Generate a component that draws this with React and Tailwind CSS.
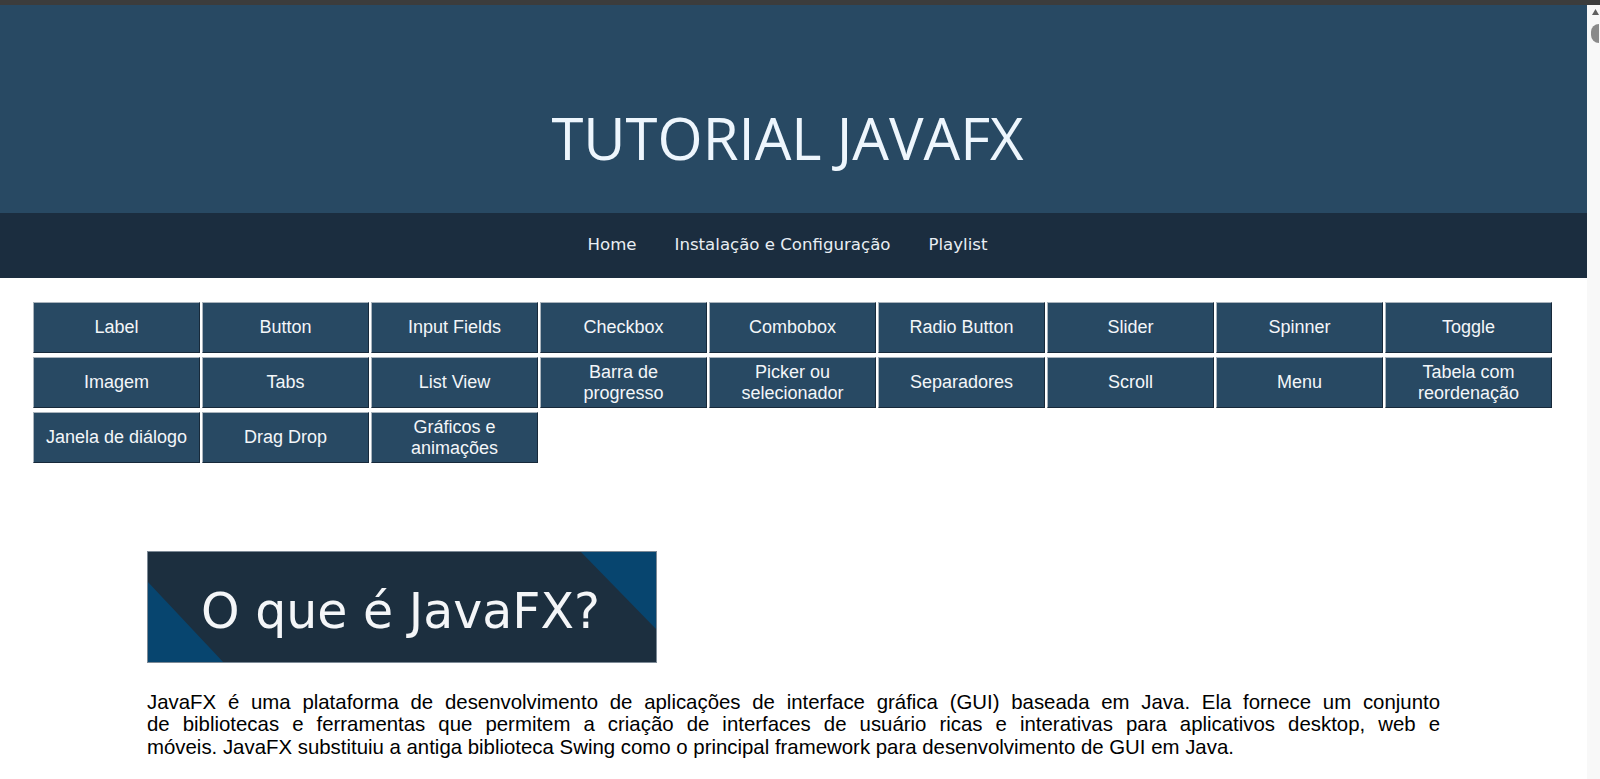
const componentes = [
  "Label",
  "Button",
  "Input Fields",
  "Checkbox",
  "Combobox",
  "Radio Button",
  "Slider",
  "Spinner",
  "Toggle",
  "Imagem",
  "Tabs",
  "List View",
  "Barra de progresso",
  "Picker ou selecionador",
  "Separadores",
  "Scroll",
  "Menu",
  "Tabela com reordenação",
  "Janela de diálogo",
  "Drag Drop",
  "Gráficos e animações",
];

const Banner = () => (
  <svg width="510" height="112" viewBox="0 0 510 112" className="block">
    <rect x="0" y="0" width="510" height="112" fill="#1c2f3f" />
    <polygon points="0,30 0,112 77,112" fill="#07456f" />
    <polygon points="433,0 510,0 510,79" fill="#07456f" />
    <rect x="0.5" y="0.5" width="509" height="111" fill="none" stroke="#7d8a96" strokeWidth="1" />
    <text
      x="54"
      y="77"
      fill="#f4f6f8"
      fontSize="49"
      fontFamily="'DejaVu Sans', sans-serif"
    >
      O que é JavaFX?
    </text>
  </svg>
);

const Scrollbar = () => (
  <div className="flex w-[13px] shrink-0 flex-col items-end bg-[#f8f8f8] pr-[1px]">
    <svg width="7" height="6" viewBox="0 0 7 6" className="mt-[4px]">
      <polygon points="3.5,0 7,6 0,6" fill="#5f5f5f" />
    </svg>
    <div className="mt-[9px] h-[19px] w-[8px] rounded-l-full bg-[#8a8a8a]" />
  </div>
);

export default function App() {
  return (
    <div className="flex h-screen flex-col overflow-hidden bg-white">
      <div className="h-[5px] shrink-0 bg-[#3c3c3c]" />

      <div className="flex min-h-0 flex-1">
        <div className="w-[1587px] shrink-0">
          {/* Cabeçalho */}
          <header className="h-[208px] bg-[#284963] pt-[93px] pr-[12px] text-center">
            <h1 className="font-['Open_Sans',sans-serif] text-[58px] leading-[79px] text-[#eef6fd]">
              TUTORIAL JAVAFX
            </h1>
          </header>

          {/* Navegação */}
          <nav className="flex h-[65px] items-center justify-center gap-[38px] bg-[#1b2d3f] pr-[12px] font-['DejaVu_Sans',sans-serif] text-[16.6px] text-[#e9eef3]">
            <a href="#">Home</a>
            <a href="#">Instalação e Configuração</a>
            <a href="#">Playlist</a>
          </nav>

          {/* Componentes */}
          <div className="mt-[24px] ml-[33px] flex w-[1524px] flex-wrap gap-x-[2px] gap-y-[4px]">
            {componentes.map((c) => (
              <button
                key={c}
                className="flex h-[51px] w-[167px] items-center justify-center border border-[#aab4bd] border-b-[#17293a] border-r-[#17293a] bg-[#284963] px-2 text-center font-['Liberation_Sans',Arial,sans-serif] text-[18px] leading-[21px] text-[#f3f6f9]"
              >
                {c}
              </button>
            ))}
          </div>

          {/* Conteúdo */}
          <main className="mx-auto mt-[88px] w-[1293px] pb-10">
            <Banner />
            <p className="mt-[28px] text-justify font-['Liberation_Sans',Arial,sans-serif] text-[20.4px] leading-[22.4px] text-black">
              <span className="block [text-align-last:justify]">
                JavaFX é uma plataforma de desenvolvimento de aplicações de interface gráfica (GUI) baseada em Java. Ela
                fornece um conjunto
              </span>
              <span className="block [text-align-last:justify]">
                de bibliotecas e ferramentas que permitem a criação de interfaces de usuário ricas e interativas para
                aplicativos desktop, web e
              </span>
              <span className="block">
                móveis. JavaFX substituiu a antiga biblioteca Swing como o principal framework para desenvolvimento de
                GUI em Java.
              </span>
            </p>
          </main>
        </div>

        <Scrollbar />
      </div>
    </div>
  );
}
